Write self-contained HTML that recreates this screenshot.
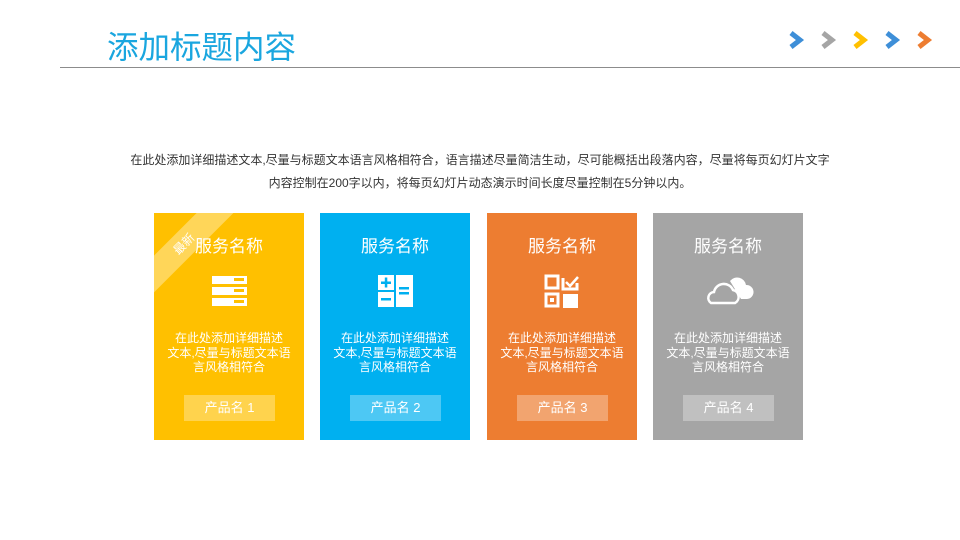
<!DOCTYPE html>
<html><head><meta charset="utf-8"><style>
*{margin:0;padding:0;box-sizing:border-box}
body{width:960px;height:540px;background:#fff;position:relative;overflow:hidden;font-family:"Liberation Sans","Noto Sans CJK SC",sans-serif}
.title{position:absolute;left:107px;top:27px;font-size:31.5px;color:#1aa6df;line-height:40px}
.line{position:absolute;left:60px;top:67px;width:900px;height:1px;background:#8c8c8c}
.arr{position:absolute;top:31px}
.para{position:absolute;left:80px;width:800px;top:149px;text-align:center;font-size:12px;line-height:23px;color:#333}
.card{position:absolute;top:213px;width:150px;height:227px;overflow:hidden;color:#fff;text-align:center}
.ct{position:absolute;left:0;width:150px;top:23px;font-size:17px;font-weight:normal;line-height:22px}
.ic{position:absolute;left:0;width:150px;top:61px;height:34px}
.ds{position:absolute;left:0;width:150px;top:118px;font-size:12px;line-height:14.5px}
.bt{position:absolute;left:30px;width:91px;top:182px;height:26px;line-height:26px;font-size:13px;background:rgba(255,255,255,.3)}
.rib{position:absolute;left:-30px;top:18px;width:120px;height:26px;background:rgba(255,255,255,.35);transform:rotate(-45deg);font-size:12px;line-height:26px;text-align:center}
</style></head><body>
<div class="title">添加标题内容</div>
<div class="line"></div>
<svg class="arr" width="960" height="18" style="left:0" viewBox="0 0 960 18">
<g stroke-width="5" fill="none" stroke-linejoin="miter">
<path d="M791 2l9 7-9 7" stroke="#3e8fd8"/>
<path d="M823 2l9 7-9 7" stroke="#a5a5a5"/>
<path d="M855 2l9 7-9 7" stroke="#ffc000"/>
<path d="M887 2l9 7-9 7" stroke="#3e8fd8"/>
<path d="M919 2l9 7-9 7" stroke="#ed7d31"/>
</g></svg>
<div class="para">在此处添加详细描述文本,尽量与标题文本语言风格相符合，语言描述尽量简洁生动，尽可能概括出段落内容，尽量将每页幻灯片文字<br>内容控制在200字以内，将每页幻灯片动态演示时间长度尽量控制在5分钟以内。</div>

<div class="card" style="left:154px;background:#ffc000">
<div class="rib">最新</div>
<div class="ct">服务名称</div>
<svg class="ic" viewBox="0 0 150 34"><g fill="#fff"><rect x="58" y="2" width="35" height="8"/><rect x="58" y="13" width="35" height="8"/><rect x="58" y="24" width="35" height="8"/></g><g fill="#ffc000"><rect x="80" y="4" width="10" height="3"/><rect x="80" y="15" width="10" height="3"/><rect x="80" y="26" width="10" height="3"/></g></svg>
<div class="ds">在此处添加详细描述<br>文本,尽量与标题文本语<br>言风格相符合</div>
<div class="bt">产品名 1</div>
</div>

<div class="card" style="left:320px;background:#00b0f0">
<div class="ct">服务名称</div>
<svg class="ic" viewBox="0 0 150 34"><g fill="#fff"><rect x="58" y="1" width="16" height="15"/><rect x="58" y="18" width="16" height="15"/><rect x="76" y="1" width="17" height="32"/></g><g fill="#00b0f0"><rect x="61" y="7.5" width="10" height="2.5"/><rect x="64.8" y="3.5" width="2.5" height="10"/><rect x="61" y="24" width="10" height="2.5"/><rect x="79" y="13" width="10" height="2.5"/><rect x="79" y="18" width="10" height="2.5"/></g></svg>
<div class="ds">在此处添加详细描述<br>文本,尽量与标题文本语<br>言风格相符合</div>
<div class="bt">产品名 2</div>
</div>

<div class="card" style="left:487px;background:#ed7d31">
<div class="ct">服务名称</div>
<svg class="ic" viewBox="0 0 150 34"><g fill="none" stroke="#fff" stroke-width="3"><rect x="59" y="2" width="12" height="12"/><rect x="59" y="20" width="12" height="12"/></g><rect x="63" y="24" width="4" height="4" fill="#fff"/><rect x="76" y="20" width="15" height="14" fill="#fff"/><path d="M76 4v11h14V9" fill="none" stroke="#fff" stroke-width="3"/><path d="M79 8l4 4 8-9" fill="none" stroke="#fff" stroke-width="2.5"/></svg>
<div class="ds">在此处添加详细描述<br>文本,尽量与标题文本语<br>言风格相符合</div>
<div class="bt">产品名 3</div>
</div>

<div class="card" style="left:653px;background:#a5a5a5">
<div class="ct">服务名称</div>
<svg class="ic" viewBox="0 0 150 34"><path d="M77 7a9 9 0 0 1 16 4a7 7 0 0 1 1 14h-6" fill="#fff"/><path d="M58 29a6 6 0 0 1 3-11a10 10 0 0 1 19-2a7 7 0 0 1 2 13z" fill="none" stroke="#fff" stroke-width="2.5"/></svg>
<div class="ds">在此处添加详细描述<br>文本,尽量与标题文本语<br>言风格相符合</div>
<div class="bt">产品名 4</div>
</div>
</body></html>
